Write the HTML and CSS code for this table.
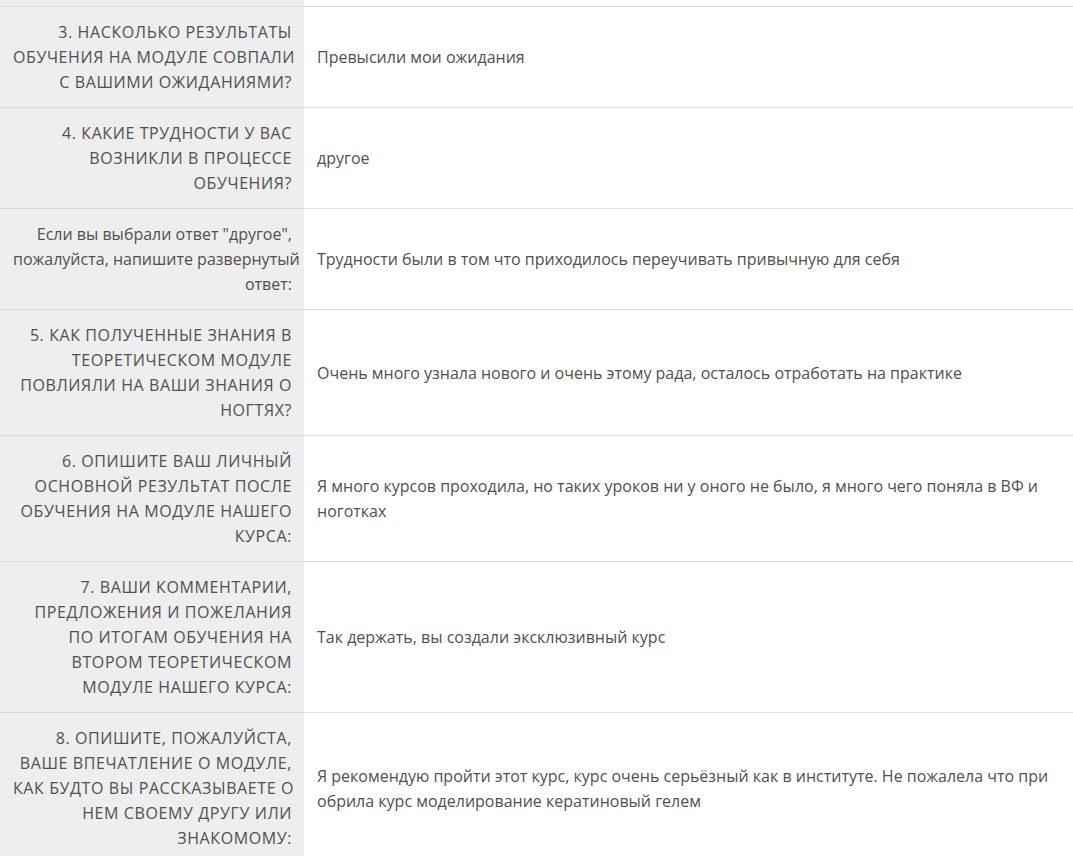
FILE: index.html
```html
<!DOCTYPE html>
<html lang="ru">
<head>
  <meta charset="UTF-8" />
  <title>Ответы анкеты</title>
  <link rel="stylesheet" href="styles.css">
</head>
<body>
  <table class="answers">
    <colgroup>
      <col class="col-question">
      <col>
    </colgroup>
    <tr class="cut">
      <th></th>
      <td></td>
    </tr>
    <tr>
      <th>3. НАСКОЛЬКО РЕЗУЛЬТАТЫ<br>ОБУЧЕНИЯ НА МОДУЛЕ СОВПАЛИ<br>С ВАШИМИ ОЖИДАНИЯМИ?</th>
      <td>Превысили мои ожидания</td>
    </tr>
    <tr>
      <th>4. КАКИЕ ТРУДНОСТИ У ВАС<br>ВОЗНИКЛИ В ПРОЦЕССЕ<br>ОБУЧЕНИЯ?</th>
      <td>другое</td>
    </tr>
    <tr>
      <th class="note">Если вы выбрали ответ "другое",<br>пожалуйста, напишите развернутый<br>ответ:</th>
      <td>Трудности были в том что приходилось переучивать привычную для себя</td>
    </tr>
    <tr>
      <th>5. КАК ПОЛУЧЕННЫЕ ЗНАНИЯ В<br>ТЕОРЕТИЧЕСКОМ МОДУЛЕ<br>ПОВЛИЯЛИ НА ВАШИ ЗНАНИЯ О<br>НОГТЯХ?</th>
      <td>Очень много узнала нового и очень этому рада, осталось отработать на практике</td>
    </tr>
    <tr>
      <th>6. ОПИШИТЕ ВАШ ЛИЧНЫЙ<br>ОСНОВНОЙ РЕЗУЛЬТАТ ПОСЛЕ<br>ОБУЧЕНИЯ НА МОДУЛЕ НАШЕГО<br>КУРСА:</th>
      <td>Я много курсов проходила, но таких уроков ни у оного не было, я много чего поняла в ВФ и<br>ноготках</td>
    </tr>
    <tr>
      <th>7. ВАШИ КОММЕНТАРИИ,<br>ПРЕДЛОЖЕНИЯ И ПОЖЕЛАНИЯ<br>ПО ИТОГАМ ОБУЧЕНИЯ НА<br>ВТОРОМ ТЕОРЕТИЧЕСКОМ<br>МОДУЛЕ НАШЕГО КУРСА:</th>
      <td>Так держать, вы создали эксклюзивный курс</td>
    </tr>
    <tr>
      <th>8. ОПИШИТЕ, ПОЖАЛУЙСТА,<br>ВАШЕ ВПЕЧАТЛЕНИЕ О МОДУЛЕ,<br>КАК БУДТО ВЫ РАССКАЗЫВАЕТЕ О<br>НЕМ СВОЕМУ ДРУГУ ИЛИ<br>ЗНАКОМОМУ:</th>
      <td>Я рекомендую пройти этот курс, курс очень серьёзный как в институте. Не пожалела что при<br>обрила курс моделирование кератиновый гелем</td>
    </tr>
  </table>
</body>
</html>
```

FILE: styles.css
```css
html, body {
  margin: 0;
  padding: 0;
  background-color: #ffffff;
  color: #505050;
  font-family: 'Open Sans', Lato, sans-serif;
  font-size: 16px;
}

.answers {
  width: 1073px;
  border-collapse: collapse;
  table-layout: fixed;
}

.col-question {
  width: 304px;
}

.answers th,
.answers td {
  border-top: 1px solid #dcdcdc;
  border-bottom: 1px solid #dcdcdc;
  padding: 13px 12px 12px 13px;
  line-height: 25px;
  vertical-align: middle;
  white-space: nowrap;
}

.answers th {
  background-color: #eeeeee;
  text-align: right;
  font-weight: normal;
  letter-spacing: 0.6px;
}

.answers th.note {
  letter-spacing: 0;
}

.answers td {
  text-align: left;
}

.answers tr.cut th,
.answers tr.cut td {
  border-top: none;
  height: 6px;
  padding: 0;
  line-height: 0;
}
```
